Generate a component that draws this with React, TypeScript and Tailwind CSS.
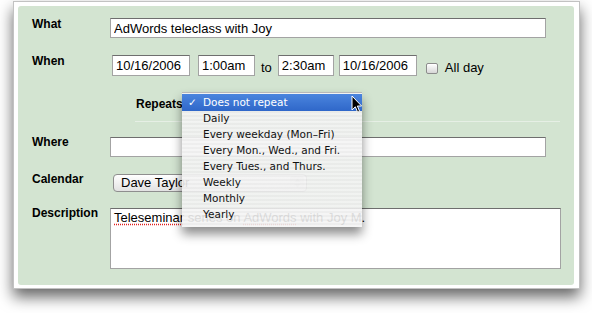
import React from "react";

const menuItems = [
  "Daily",
  "Every weekday (Mon–Fri)",
  "Every Mon., Wed., and Fri.",
  "Every Tues., and Thurs.",
  "Weekly",
  "Monthly",
  "Yearly",
];

const Label = ({ children, className = "" }: { children: React.ReactNode; className?: string }) => (
  <div className={`w-[78px] shrink-0 text-[12px] leading-[14px] font-bold text-black ${className}`}>{children}</div>
);

const field =
  "bg-white border border-[#a3a3a3] border-t-[#6e6e6e] text-[13px] text-black px-[3px] outline-none font-['Liberation_Sans',Arial,sans-serif]";

const App = () => {
  return (
    <div className="w-[592px] h-[313px] bg-white overflow-hidden pt-px pl-[13px] font-['Liberation_Sans',Arial,sans-serif]">
      <div className="w-[567px] h-[288px] bg-white border border-[#c2c2c2] pt-[4px] pl-[4px] pr-[5px] pb-[3px] shadow-[0_8px_14px_rgba(0,0,0,0.6)]">
        <div className="relative h-full rounded-[3px] bg-[#d3e4d1] pl-[14px] pt-[11px]">
          {/* What */}
          <div className="flex items-start">
            <Label>What</Label>
            <input readOnly defaultValue="AdWords teleclass with Joy" className={`${field} mt-px w-[436px] h-[20px] text-[13.5px]`} />
          </div>

          {/* When */}
          <div className="flex items-start mt-[16px]">
            <Label>When</Label>
            <input readOnly defaultValue="10/16/2006" className={`${field} mt-px ml-[2px] w-[78px] h-[21px]`} />
            <input readOnly defaultValue="1:00am" className={`${field} mt-px ml-[8px] w-[57px] h-[21px]`} />
            <span className="ml-[6px] mt-[6px] text-[13px] leading-[15px]">to</span>
            <input readOnly defaultValue="2:30am" className={`${field} mt-px ml-[6px] w-[56px] h-[21px]`} />
            <input readOnly defaultValue="10/16/2006" className={`${field} mt-px ml-[5px] w-[78px] h-[21px]`} />
            <span className="ml-[9px] mt-[9px] w-[12px] h-[11px] rounded-[2px] border border-[#8c8c8c] bg-gradient-to-b from-white to-[#d6d6d6] shadow-[inset_0_1px_1px_rgba(255,255,255,0.9)]" />
            <span className="ml-[7px] mt-[6px] text-[13px] leading-[15px]">All day</span>
          </div>

          {/* Repeats */}
          <div className="mt-[21px] ml-[104px] text-[12px] leading-[14px] font-bold">Repeats</div>
          <div className="mt-[10px] ml-[103px] w-[425px] h-px bg-[#e6efe5]" />

          {/* Where */}
          <div className="flex items-start mt-[13px]">
            <Label>Where</Label>
            <input readOnly defaultValue="" className={`${field} mt-[2px] w-[436px] h-[20px]`} />
          </div>

          {/* Calendar */}
          <div className="flex items-start mt-[15px]">
            <Label>Calendar</Label>
            <div className="mt-[2px] ml-[3px] w-[194px] h-[18px] rounded-[4px] border border-[#8e8e8e] bg-gradient-to-b from-white to-[#e2e2e2] flex items-center justify-between pl-[7px] pr-[2px] text-[13px]">
              <span>Dave Taylor</span>
              <span className="w-[14px] h-[14px] rounded-[3px] bg-[#e4e4e4] flex items-center justify-center">
                <svg width="7" height="10" viewBox="0 0 7 10">
                  <path d="M3.5 0.5 L6.5 4 L0.5 4 Z M3.5 9.5 L6.5 6 L0.5 6 Z" fill="#c8c8c8" />
                </svg>
              </span>
            </div>
          </div>

          {/* Description */}
          <div className="flex items-start mt-[14px]">
            <Label>Description</Label>
            <div className={`${field} mt-[2px] w-[451px] h-[61px] leading-[15px] pt-px`}>
              <span className="underline decoration-dotted decoration-[#e02020] underline-offset-2">Teleseminar</span> series on{" "}
              <span className="underline decoration-dotted decoration-[#e02020] underline-offset-2">AdWords</span> with Joy M.
            </div>
          </div>

          {/* Repeat menu */}
          <div className="absolute left-[164px] top-[86px] w-[180px] h-[135px] border-t border-[#b8b8b8] pt-[1px] bg-[repeating-linear-gradient(0deg,rgba(244,244,244,0.9)_0px,rgba(244,244,244,0.9)_2px,rgba(236,236,236,0.9)_2px,rgba(236,236,236,0.9)_4px)] shadow-[0_7px_10px_rgba(0,0,0,0.45)] font-['DejaVu_Sans',sans-serif] text-[10.5px]">
            <div className="h-[17px] flex items-center bg-gradient-to-b from-[#4b85de] to-[#2f67c9] text-white">
              <span className="w-[21px] pl-[6px]">✓</span>
              <span>Does not repeat</span>
            </div>
            {menuItems.map((item) => (
              <div key={item} className="h-[16px] flex items-center pl-[21px] text-[#111]">
                {item}
              </div>
            ))}
          </div>

          {/* Cursor */}
          <svg className="absolute left-[333px] top-[89px]" width="13" height="20" viewBox="0 0 13 20">
            <path d="M1 1 L1 15 L4.3 11.8 L6.6 17.2 L8.6 16.3 L6.4 11 L10.6 11 Z" fill="#000" stroke="#fff" strokeWidth="1" />
          </svg>
        </div>
      </div>
    </div>
  );
};

export default App;
